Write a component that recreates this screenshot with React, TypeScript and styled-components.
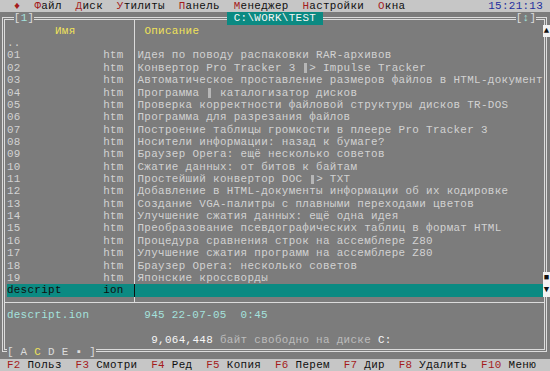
import React from "react";
import styled, { createGlobalStyle } from "styled-components";

const CW = 6.875;
const RH = 371 / 30;
const px = (n: number) => `${n.toFixed(3)}px`;
const FS = 10.9;
const LS = CW - FS * 0.60009765625;

const C = {
  panel: "#7c7c7c",
  bar: "#c6c6c6",
  text: "#d2d2d2",
  bright: "#f6f6f6",
  dim: "#bdbdbd",
  yellow: "#f0e25a",
  teal: "#0b8a82",
  cyan: "#a4e2dc",
  frame: "#dcdcdc",
  red: "#a51c1c",
  blue: "#1f2f9e",
  ink: "#101010",
  unk: "#b6b6b6",
};

const GlobalStyle = createGlobalStyle`
  html, body { margin: 0; padding: 0; background: ${C.panel}; }
  #root { width: 550px; height: 371px; }
`;

const Screen = styled.div`
  width: 550px;
  height: 371px;
  overflow: hidden;
  display: flex;
  flex-direction: column;
  background: ${C.panel};
  font-family: "Liberation Mono", "DejaVu Sans Mono", monospace;
  font-size: ${FS}px;
  letter-spacing: ${px(LS)};
  line-height: ${px(RH)};
  white-space: pre;
  color: ${C.text};
`;

const MenuBar = styled.div`
  flex: none;
  height: ${px(RH)};
  display: flex;
  gap: ${px(2 * CW)};
  padding: 0 ${px(CW)} 0 ${px(2 * CW)};
  background: ${C.bar};
  color: ${C.ink};
`;

const MenuItem = styled.span``;

const Hot = styled.span`
  color: ${C.red};
`;

const Clock = styled.span`
  margin-left: auto;
  color: ${C.blue};
`;

const Panel = styled.div`
  position: relative;
  flex: none;
  height: ${px(28 * RH)};
  display: flex;
  flex-direction: column;
`;

const Frame = styled.div`
  flex: 1;
  box-sizing: border-box;
  margin: 4.6px 3.5px 6.63px 2px;
  padding: 0 0.375px 2.73px 1.875px;
  border: 3px double ${C.frame};
  display: flex;
  flex-direction: column;
`;

const Row = styled.div<{ $sel?: boolean }>`
  display: grid;
  grid-template-columns: ${px(18 * CW)} ${px(CW)} ${px(59 * CW)};
  height: ${px(RH)};
  background: ${(p) => (p.$sel ? C.teal : "transparent")};
  color: ${(p) => (p.$sel ? C.ink : C.text)};
`;

const HeaderRow = styled(Row)`
  height: ${px(RH + 4.77)};
  align-items: end;
  color: ${C.yellow};
`;

const SepRow = styled(Row)`
  position: relative;
  &::after {
    content: "";
    position: absolute;
    left: -1.875px;
    right: -0.375px;
    top: 5px;
    height: 1px;
    background: ${C.frame};
  }
`;

const Divider = styled.span<{ $color?: string; $half?: boolean }>`
  position: relative;
  align-self: stretch;
  &::before {
    content: "";
    position: absolute;
    left: 3.375px;
    top: 0;
    width: 1px;
    height: ${(p) => (p.$half ? "5px" : "100%")};
    background: ${(p) => p.$color ?? C.frame};
  }
`;

const NameCell = styled.span`
  display: flex;
`;

const Name = styled.span`
  width: ${px(14 * CW)};
`;

const Ext = styled.span``;

const HeadName = styled.span`
  padding-left: ${px(7 * CW)};
`;

const HeadDesc = styled.span`
  padding-left: ${px(CW)};
`;

const DescCell = styled.span``;

const Unk = styled.span`
  display: inline-block;
  position: relative;
  width: ${px(CW)};
  height: ${px(RH)};
  vertical-align: top;
  &::before {
    content: "";
    position: absolute;
    left: 2px;
    top: 1.5px;
    width: 3px;
    height: 9.5px;
    background: ${C.unk};
  }
`;

const InfoLine = styled.div<{ $indent?: number }>`
  height: ${px(RH)};
  padding-left: ${(p) => px((p.$indent ?? 0) * CW)};
  color: ${C.cyan};
`;

const FreeLine = styled(InfoLine)`
  color: ${C.dim};
`;

const Bright = styled.span`
  color: ${C.bright};
`;

const BorderLabel = styled.div<{ $col: number; $row: number; $hl?: boolean }>`
  position: absolute;
  left: ${(p) => px(p.$col * CW)};
  top: ${(p) => px(p.$row * RH)};
  height: ${px(RH)};
  background: ${(p) => (p.$hl ? C.teal : C.panel)};
  color: ${(p) => (p.$hl ? C.bright : C.frame)};
`;

const Accent = styled.span<{ $c: string }>`
  color: ${(p) => p.$c};
`;

const ScrollBar = styled.div`
  position: absolute;
  left: ${px(79 * CW)};
  top: ${px(RH)};
  width: ${px(CW)};
  height: ${px(22 * RH)};
  display: flex;
  flex-direction: column;
`;

const ScrollCell = styled.span`
  height: ${px(RH)};
  background: #f2f2f2;
  color: ${C.ink};
  text-align: center;
  letter-spacing: 0;
  font-size: 9px;
`;

const ScrollTrack = styled.span`
  flex: 1;
`;

const KeyBar = styled.div`
  flex: none;
  height: ${px(RH)};
  display: flex;
  gap: ${px(2 * CW)};
  padding-left: ${px(CW)};
  background: ${C.bar};
  color: ${C.ink};
`;

const KeyItem = styled.span``;

const Key = styled.span`
  color: ${C.red};
`;

const menu = ["Файл", "Диск", "Утилиты", "Панель", "Менеджер", "Настройки", "Окна"];

const files: [string, string][] = [
  ["01", "Идея по поводу распаковки RAR-архивов"],
  ["02", "Конвертор Pro Tracker 3 ¤> Impulse Tracker"],
  ["03", "Автоматическое проставление размеров файлов в HTML-документ"],
  ["04", "Программа ¤ каталогизатор дисков"],
  ["05", "Проверка корректности файловой структуры дисков TR-DOS"],
  ["06", "Программа для разрезания файлов"],
  ["07", "Построение таблицы громкости в плеере Pro Tracker 3"],
  ["08", "Носители информации: назад к бумаге?"],
  ["09", "Браузер Opera: ещё несколько советов"],
  ["10", "Сжатие данных: от битов к байтам"],
  ["11", "Простейший конвертор DOC ¤> TXT"],
  ["12", "Добавление в HTML-документы информации об их кодировке"],
  ["13", "Создание VGA-палитры с плавными переходами цветов"],
  ["14", "Улучшение сжатия данных: ещё одна идея"],
  ["15", "Преобразование псевдографических таблиц в формат HTML"],
  ["16", "Процедура сравнения строк на ассемблере Z80"],
  ["17", "Улучшение сжатия программ на ассемблере Z80"],
  ["18", "Браузер Opera: несколько советов"],
  ["19", "Японские кроссворды"],
];

const keys: [string, string][] = [
  ["F2", "Польз"],
  ["F3", "Смотри"],
  ["F4", "Ред"],
  ["F5", "Копия"],
  ["F6", "Перем"],
  ["F7", "Дир"],
  ["F8", "Удалить"],
  ["F10", "Меню"],
];

function Desc({ text }: { text: string }) {
  const parts = text.split("¤");
  return (
    <DescCell>
      {parts.map((part, i) => (
        <React.Fragment key={i}>
          {i > 0 && <Unk />}
          {part}
        </React.Fragment>
      ))}
    </DescCell>
  );
}

export default function App() {
  return (
    <>
      <GlobalStyle />
      <Screen>
        <MenuBar>
          <MenuItem>
            <Hot>♦</Hot>
          </MenuItem>
          {menu.map((m) => (
            <MenuItem key={m}>
              <Hot>{m[0]}</Hot>
              {m.slice(1)}
            </MenuItem>
          ))}
          <Clock>15:21:13</Clock>
        </MenuBar>

        <Panel>
          <Frame>
            <HeaderRow>
              <HeadName>Имя</HeadName>
              <Divider />
              <HeadDesc>Описание</HeadDesc>
            </HeaderRow>
            <Row>
              <NameCell>
                <Name>..</Name>
              </NameCell>
              <Divider />
              <DescCell />
            </Row>
            {files.map(([n, d]) => (
              <Row key={n}>
                <NameCell>
                  <Name>{n}</Name>
                  <Ext>htm</Ext>
                </NameCell>
                <Divider />
                <Desc text={d} />
              </Row>
            ))}
            <Row $sel>
              <NameCell>
                <Name>descript</Name>
                <Ext>ion</Ext>
              </NameCell>
              <Divider $color={C.ink} />
              <DescCell />
            </Row>
            <SepRow>
              <span />
              <Divider $half />
              <span />
            </SepRow>
            <InfoLine>descript.ion        945 22-07-05  0:45</InfoLine>
            <InfoLine />
            <FreeLine $indent={21}>
              <Bright>9,064,448</Bright> байт свободно на диске <Bright>C:</Bright>
            </FreeLine>
          </Frame>

          <BorderLabel $col={2} $row={0}>
            [<Accent $c={C.cyan}>1</Accent>]
          </BorderLabel>
          <BorderLabel $col={33} $row={0} $hl>
            {" C:\\WORK\\TEST "}
          </BorderLabel>
          <BorderLabel $col={75} $row={0}>
            [<Accent $c={C.cyan}>↕</Accent>]
          </BorderLabel>
          <BorderLabel $col={1} $row={27}>
            {"[ A "}
            <Accent $c={C.yellow}>C</Accent>
            {" D E ▪ ]"}
          </BorderLabel>

          <ScrollBar>
            <ScrollCell>▲</ScrollCell>
            <ScrollTrack />
            <ScrollCell>■</ScrollCell>
            <ScrollCell>▼</ScrollCell>
          </ScrollBar>
        </Panel>

        <KeyBar>
          {keys.map(([k, l]) => (
            <KeyItem key={k}>
              <Key>{k}</Key> {l}
            </KeyItem>
          ))}
        </KeyBar>
      </Screen>
    </>
  );
}
